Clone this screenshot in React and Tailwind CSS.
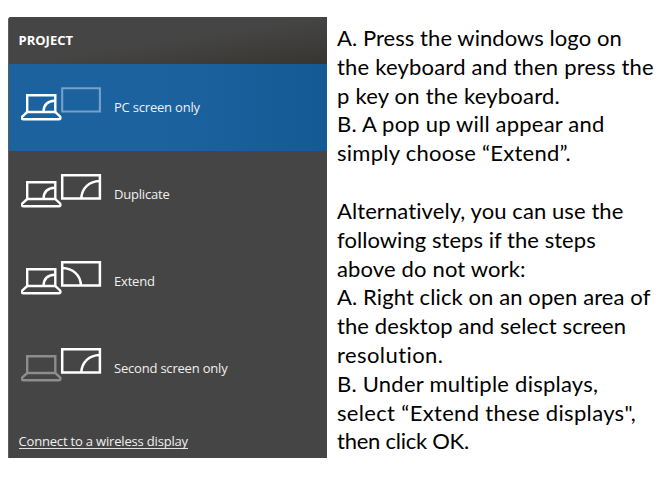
const rows = [
  { label: 'PC screen only', laptop: 'on', monitor: 'dim', active: true },
  { label: 'Duplicate', laptop: 'on', monitor: 'right' },
  { label: 'Extend', laptop: 'on', monitor: 'left' },
  { label: 'Second screen only', laptop: 'dim', monitor: 'right' },
];

const lines = [
  ['A. Press the windows logo on', 'tracking-[0.06px]'],
  ['the keyboard and then press the', 'tracking-[0.2px]'],
  ['p key on the keyboard.', 'tracking-[0.22px]'],
  ['B. A pop up will appear and', 'tracking-[0.2px]'],
  ['simply choose “Extend”.', 'tracking-[0.26px]'],
  ['\u00a0', ''],
  ['Alternatively, you can use the', 'tracking-[0.09px]'],
  ['following steps if the steps', 'tracking-[0.05px]'],
  ['above do not work:', 'tracking-[0.15px]'],
  ['A. Right click on an open area of', 'tracking-[0.1px]'],
  ['the desktop and select screen', 'tracking-[0.09px]'],
  ['resolution.', 'tracking-[0.42px]'],
  ['B. Under multiple displays,', 'tracking-[0.24px]'],
  ['select “Extend these displays",', 'tracking-[0.33px]'],
  ['then click OK.', 'tracking-[-0.25px]'],
];

function ScreensIcon({ laptop, monitor, active }) {
  const laptopColor = laptop === 'dim' ? '#8d8d8d' : '#ffffff';
  const monitorColor = monitor === 'dim' ? '#76a1c8' : '#ffffff';
  return (
    <svg width="82" height="36" viewBox="0.7 0 82 36" fill="none" strokeWidth="2.4" className="shrink-0">
      <g stroke={laptopColor}>
        <path d="M6.9 25V8.2H35V25Z" />
        <path d="M6.9 25L1.9 29.6Q.9 32.2 3.2 32.2H38.4Q40.8 32.2 39.9 29.6L35 25" strokeLinejoin="round" />
        {laptop === 'on' && <path d="M23.2 25Q23.4 14.3 34.5 13.8" />}
      </g>
      <g stroke={monitorColor} strokeWidth={active ? 2.1 : 2.5}>
        <path d="M41.9 1.2H79.6V24.5H41.9Z" />
        {monitor === 'right' && <path d="M61 24.5C61.5 14 69 7.2 79.5 7" />}
        {monitor === 'left' && <path d="M60.7 24.5C60.2 14 52.5 7.2 42 7" />}
      </g>
    </svg>
  );
}

export default function App() {
  return (
    <main className="flex h-[480px] w-[672px] overflow-hidden bg-white pl-2 pt-[17px]">
      <section className="flex h-[441px] w-[319px] shrink-0 flex-col rounded-tl-[3px] border-l border-[#5c5c5c] bg-[#454545] font-['Open_Sans',sans-serif] text-[13px] text-[#f0f0f0]">
        <h1 className="h-[47px] rounded-tl-[2px] bg-linear-to-br from-[#454545] from-50% to-[#373531] pl-[9.5px] pt-[14px] text-[13px] leading-[18px] font-bold text-white">
          PROJECT
        </h1>
        {rows.map((row) => (
          <div
            key={row.label}
            className={`flex h-[87px] items-start pl-3 pt-[23px] ${row.active ? 'bg-linear-to-r from-[#1b629e] from-50% to-[#145b96]' : ''}`}
          >
            <ScreensIcon {...row} />
            <span className="ml-[11px] mt-[11px] leading-[18px] tracking-[-0.2px] whitespace-nowrap">{row.label}</span>
          </div>
        ))}
        <a className="ml-[9.5px] mt-[23px] w-fit border-b border-[#e4e4e4] leading-[13px] tracking-[-0.18px]">
          Connect to a wireless display
        </a>
      </section>
      <section className="ml-[10px] mt-[6.9px] font-['Lato',sans-serif] text-[22px] leading-[28.83px] text-black [font-variant-ligatures:none]">
        {lines.map(([text, tracking], i) => (
          <p key={i} className={`whitespace-nowrap ${tracking}`}>{text}</p>
        ))}
      </section>
    </main>
  );
}
